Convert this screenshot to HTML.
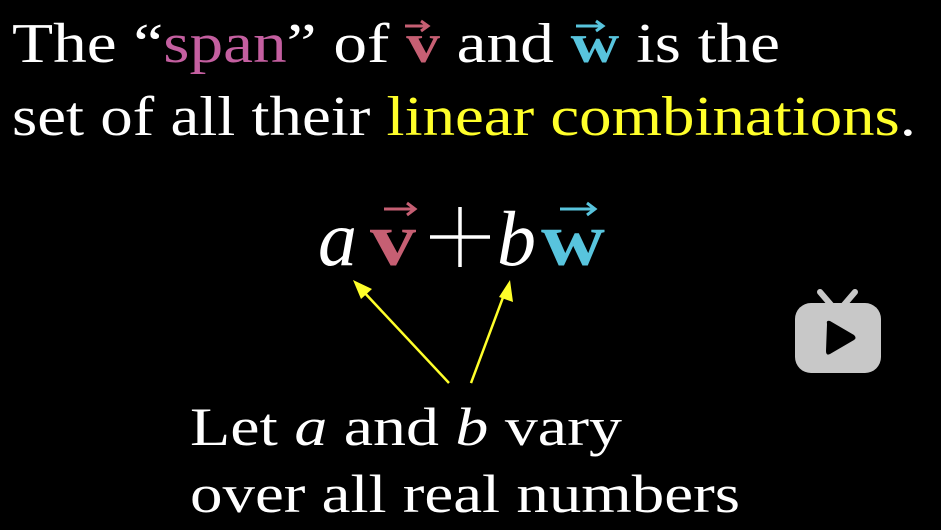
<html><body style="margin:0;background:#000">
<svg width="941" height="530" xmlns="http://www.w3.org/2000/svg" style="display:block">
<rect width="941" height="530" fill="#000"/>
<g font-family="Liberation Serif, serif" fill="#fff">
<text x="12" y="62" font-size="56" textLength="768" lengthAdjust="spacingAndGlyphs">The “<tspan fill="#c45fa0">span</tspan>” of <tspan fill="#c65f73" font-weight="bold">v</tspan> and <tspan fill="#58c4dd" font-weight="bold">w</tspan> is the</text>
<text x="12" y="135" font-size="56" textLength="904" lengthAdjust="spacingAndGlyphs">set of all their <tspan fill="#ffff2a">linear combinations</tspan>.</text>
<text x="318" y="265" font-size="78" font-style="italic">a</text>
<text x="370" y="265" font-size="76" font-weight="bold" fill="#c65f73" textLength="46" lengthAdjust="spacingAndGlyphs">v</text>
<text x="497" y="265" font-size="78" font-style="italic">b</text>
<text x="541" y="265" font-size="76" font-weight="bold" fill="#58c4dd" textLength="64" lengthAdjust="spacingAndGlyphs">w</text>
<text x="190" y="445" font-size="54" textLength="432" lengthAdjust="spacingAndGlyphs">Let <tspan font-style="italic">a</tspan> and <tspan font-style="italic">b</tspan> vary</text>
<text x="190" y="512" font-size="54" textLength="550" lengthAdjust="spacingAndGlyphs">over all real numbers</text>
</g>
<path d="M430 237H490M460 207V267" stroke="#fff" stroke-width="3.5"/>
<g stroke-width="3" fill="none">
<path d="M384 209H414M407 203L415 209L407 215" stroke="#c65f73"/>
<path d="M560 209H594M587 203L595 209L587 215" stroke="#58c4dd"/>
<path d="M405 26H427M421 21L428 26L421 31" stroke="#c65f73"/>
<path d="M576 26H602M596 21L603 26L596 31" stroke="#58c4dd"/>
<path d="M449 383L362 290M471 383L505 292" stroke="#ffff2a" stroke-width="2.5"/>
</g>
<path d="M353 280L372 289L361 299Z M510 280L513 302L499 297Z" fill="#ffff2a"/>
<g fill="#c8c8c8">
<rect x="795" y="303" width="86" height="70" rx="16"/>
<path d="M820 292L832 306" stroke="#c8c8c8" stroke-width="6" stroke-linecap="round"/>
<path d="M855 292L843 306" stroke="#c8c8c8" stroke-width="6" stroke-linecap="round"/>
</g>
<path d="M827 324Q826 320 830 321L854 335Q857 338 854 340L830 354Q826 356 826 351Z" fill="#000"/>
</svg>
</body></html>
